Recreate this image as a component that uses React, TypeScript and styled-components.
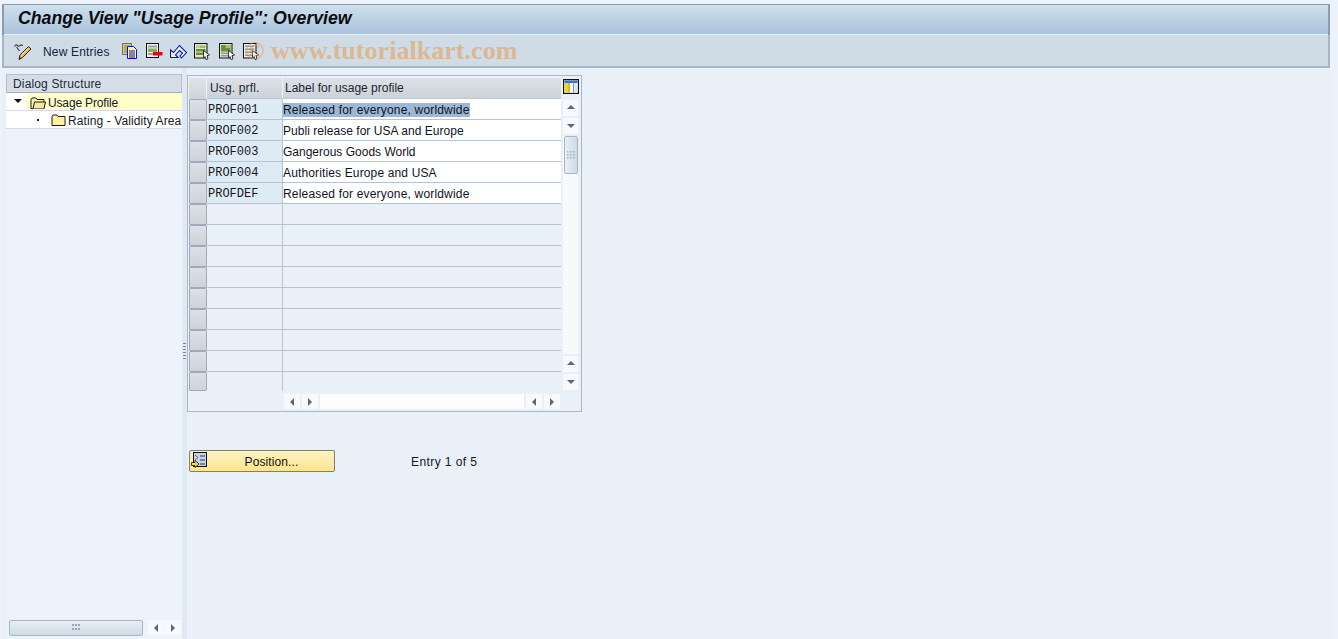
import React from 'react';
import styled, { createGlobalStyle } from 'styled-components';

const Global = createGlobalStyle`
  html, body { margin: 0; padding: 0; background: #edf2fa; overflow: hidden; }
  * { box-sizing: border-box; }
  svg { flex: none; }
`;

const UI = `"Liberation Sans", Arial, sans-serif`;

const Page = styled.div`
  width: 1338px; height: 639px; padding: 4px 8px 0 2px; display: flex; flex-direction: column;
  font: 12px ${UI}; color: #10131c; position: relative; overflow: hidden;
`;
const TitleBar = styled.div`
  height: 31px; flex: none; padding: 0 0 3px 14px; display: flex; align-items: center;
  background: linear-gradient(#cfe0ec, #a9c2dc);
  border: 1px solid #8c9cae; border-width: 1px 2px 0 2px; border-bottom: 0;
  box-shadow: inset 0 -1px 0 #e6f0f8;
`;
const Title = styled.h1`
  margin: 0; font: italic bold 17.7px ${UI}; color: #0a0c12; white-space: nowrap;
`;
const Toolbar = styled.div`
  height: 33px; flex: none; display: flex; align-items: center; padding: 1px 0 0 10px;
  background: #cfdce6; border: 2px solid #a6b5c6; border-top: 0; position: relative;
`;
const ToolIcon = styled.span<{ $ml?: number }>`
  display: flex; width: 16px; height: 16px; margin-left: ${p => p.$ml ?? 0}px; flex: none;
`;
const ToolText = styled.span`
  margin: 1px 0 0 13px; font-size: 12px; letter-spacing: 0.17px; color: #1a2140; white-space: nowrap;
`;
const Watermark = styled.span`
  position: absolute; left: 241px; top: 1px; font: bold 26.1px "Liberation Serif", serif; color: #e8953f;
  opacity: 0.5; white-space: nowrap;
`;
const Work = styled.div`
  flex: 1; display: flex; min-height: 0; background: #e9f0f7;
`;
const TreePanel = styled.div`
  width: 176px; margin: 6px 0 0 4px; flex: none; display: flex; flex-direction: column; background: #edf3fb;
`;
const TreeHeader = styled.div`
  height: 19px; flex: none; padding: 1px 0 0 6px; background: #d5dee7; border: 1px solid #b4c0cf; border-bottom-color: #9fadbd;
  font-size: 12px; letter-spacing: 0.15px; color: #1f2a3a; line-height: 16px; white-space: nowrap;
`;
const TreeRow = styled.div<{ $pad: number }>`
  height: 18px; flex: none; display: flex; align-items: center; padding-left: ${p => p.$pad}px;
  background: #fff; border-bottom: 1px solid #d3dce6; overflow: hidden; white-space: nowrap;
`;
const TreeLabel = styled.span<{ $sel?: boolean }>`
  display: flex; align-items: center; height: 17px; gap: 2px; padding: 2px 0 0 ${p => (p.$sel ? 4 : 1)}px; flex: 1;
  letter-spacing: ${p => (p.$sel ? -0.15 : 0.1)}px; color: #161a28;
  background: ${p => (p.$sel ? '#ffffc8' : 'transparent')};
`;
const Twisty = styled.span`
  width: 0; height: 0; border: 4px solid transparent; border-top: 4px solid #111; border-bottom: 0; margin: 0 4px 2px 0; flex: none;
`;
const Bullet = styled.span`
  width: 2px; height: 2px; background: #222; margin-right: 12px; flex: none;
`;
const TreeFill = styled.div`flex: 1;`;
const TreeScroll = styled.div`
  height: 17px; margin-bottom: 3px; flex: none; display: flex; align-items: center; gap: 1px; padding-left: 3px;
`;
const Thumb = styled.div<{ $w: number }>`
  width: ${p => p.$w}px; height: 16px; display: flex; align-items: center; justify-content: center; margin-right: 4px;
  background: linear-gradient(#e9eff5, #cddae6); border: 1px solid #a9b5c2; border-radius: 2px;
`;
const Sash = styled.div`
  width: 5px; flex: none; background: #e0e9f2; display: flex; align-items: center; justify-content: center; padding-bottom: 3px;
`;
const SashGrip = styled.div`
  width: 3px; height: 18px; background: repeating-linear-gradient(#7f8c9a 0 1px, transparent 1px 3px);
`;
const Main = styled.div`flex: 1; padding: 7px 0 0 0; display: flex; flex-direction: column; align-items: flex-start;`;
const TableBox = styled.div`
  width: 395px; height: 337px; flex: none; border: 1px solid #a9b7c8; padding: 2px 1px 0 1px; display: grid;
  grid-template-columns: 372px 19px; grid-template-rows: 313px 21px; background: #e9f0f7;
`;
const Grid = styled.div`
  display: grid; grid-template-columns: 18px 76px 1fr; grid-auto-rows: 21px; align-content: start; overflow: hidden;
`;
const Corner = styled.div`
  height: 21px; background: linear-gradient(#dfe4e9, #ccd3da); border-right: 1px solid #eef2f6;
`;
const HeadCell = styled.div<{ $w?: boolean }>`
  height: 21px; padding: 0 0 0 ${p => (p.$w ? 2 : 3)}px; display: flex; align-items: center; background: linear-gradient(#dde2e7, #cbd2d9);
  border-right: ${p => (p.$w ? 0 : '1px solid #f1f4f7')}; border-bottom: 1px solid #bcc7d3; letter-spacing: ${p => (p.$w ? 0 : 0.14)}px; color: #1d2530; white-space: nowrap;
`;
const RowBtn = styled.div<{ $last?: boolean }>`
  height: ${p => (p.$last ? 19 : 21)}px; background: linear-gradient(#dde1e6, #cdd3da); border: 1px solid #9dabba; border-radius: 1px;
`;
const KeyCell = styled.div<{ $e?: boolean }>`
  height: 21px; padding: 1px 0 0 1px; display: flex; align-items: center; background: ${p => (p.$e ? '#e9f0f7' : '#deebf5')};
  border-bottom: 1px solid #b5c3d2; border-right: 1px solid #b5c3d2; font: 12px "Liberation Mono", monospace; color: #16161c;
`;
const LabelCell = styled.div<{ $e?: boolean; $ls?: number }>`
  height: 21px; padding: 1px 0 0 0; display: flex; align-items: center; background: ${p => (p.$e ? '#e9f0f7' : '#fff')};
  border-bottom: 1px solid #b5c3d2; letter-spacing: ${p => p.$ls ?? 0}px; color: #10131c; white-space: nowrap;
`;
const Selected = styled.span`background: #9db8d6; height: 14px; line-height: 14px; display: block;`;
const VScroll = styled.div`
  display: flex; flex-direction: column; align-items: flex-start; padding-left: 2px;
`;
const ConfigBtn = styled.div`height: 22px; display: flex; align-items: flex-start; padding: 1px 0 0 0; flex: none;`;
const VBtn = styled.div`
  width: 15px; height: 16px; background: #f7f9fc; display: flex; align-items: center; justify-content: center; flex: none; margin-bottom: 2px;
`;
const VTrack = styled.div`
  width: 15px; height: 218px; flex: none; background: #f7f9fc; margin-bottom: 2px; padding-left: 1px;
`;
const VThumb = styled.div`
  width: 14px; height: 38px; background: linear-gradient(90deg, #e9eff5, #cddae6); border: 1px solid #a9b5c2; border-radius: 2px;
  display: flex; align-items: center; justify-content: center;
`;
const HScroll = styled.div`
  grid-column: 1; display: flex; align-items: flex-start; padding: 3px 0 0 95px; gap: 2px;
`;
const HBtn = styled.div`
  width: 16px; height: 15px; background: #f7f9fc; display: flex; align-items: center; justify-content: center; flex: none;
`;
const HTrack = styled.div`width: 204px; height: 15px; background: #fdfdfe;`;
const Bottom = styled.div`
  display: flex; align-items: center; margin: 37px 0 0 2px; height: 23px;
`;
const PosButton = styled.button`
  width: 146px; height: 22px; padding: 2px 0 0 19px; font: 12px ${UI}; letter-spacing: 0.1px; color: #111; position: relative;
  background: linear-gradient(#fff3c4, #ffe48e); border: 1px solid #7f7f70; border-radius: 2px; display: flex; align-items: center; justify-content: center;
`;
const PosIcon = styled.span`position: absolute; left: 1px; top: 1px; display: flex;`;
const Entry = styled.span`margin: 2px 0 0 76px; letter-spacing: 0.42px; color: #14161f;`;

const Arrow = ({ d }: { d: 'up' | 'down' | 'left' | 'right' }) => {
  const p = { up: '1,6 5,2 9,6', down: '1,3 9,3 5,7', left: '7,1 7,9 3,5', right: '3,1 3,9 7,5' }[d];
  return <svg width="10" height="10" viewBox="0 0 10 10"><polygon points={p} fill="#5c6a78" /></svg>;
};
const Dots = () => (
  <svg width="8" height="8" viewBox="0 0 8 8">
    {[0, 3, 6].flatMap(x => [0, 3, 6].map(y => <rect key={`${x}${y}`} x={x} y={y} width="1.5" height="1.5" fill="#9fadbb" />))}
  </svg>
);
const HDots = () => (
  <svg width="10" height="7" viewBox="0 0 10 7">
    {[1, 4, 7].flatMap(x => [0, 4].map(y => <rect key={`${x}${y}`} x={x} y={y} width="2" height="2" fill="#9aa8b5" />))}
  </svg>
);
const Folder = ({ open }: { open?: boolean }) => (
  <svg width="16" height="14" viewBox="0 0 16 14">
    <path d="M1 3.5 L2 2 H6 L7 3.5 H14 V12.5 H1 Z" fill={open ? '#fdf4c0' : '#fff0a8'} stroke="#1a1a10" strokeWidth="1" />
    {open && <path d="M3 12.5 L4.5 6 H15.5 L14 12.5" fill="#f8e89c" stroke="#1a1a10" strokeWidth="1" />}
  </svg>
);
const Pencil = () => (
  <svg width="18" height="18" viewBox="0 0 18 18">
    <path d="M0.5 3.5 q1.5 -2.5 3 -1 q1.5 1.5 2.5 0 q1.5 -1.5 2.5 .5" fill="none" stroke="#444" strokeWidth="1.2" />
    <path d="M2.5 4 l3 4" stroke="#444" strokeWidth="1.2" />
    <path d="M5 16.5 L6 12 L14.5 3.5 L17 6 L8.5 14.5 Z" fill="#f4b44a" stroke="#222" strokeWidth="1" />
    <path d="M7 12.5 L14.5 5" stroke="#fff2c8" strokeWidth="1" />
    <path d="M5 16.5 L5.6 14 L7.4 15.6 Z" fill="#222" />
  </svg>
);
const CopyIcon = () => (
  <svg width="16" height="16" viewBox="0 0 16 16">
    <rect x="0.5" y="0.5" width="9" height="11" fill="#d6cc78" stroke="#77735a" />
    <path d="M2 3 H8 M2 5 H8 M2 7 H8 M2 9 H8" stroke="#8d8a5e" />
    <path d="M5.5 3.5 H11.5 L14.5 6.5 V15.5 H5.5 Z" fill="#fff68a" stroke="#0a12c8" />
    <path d="M7 8 H13 M7 10 H13 M7 12 H13 M7 14 H13" stroke="#0a12c8" />
  </svg>
);
const DelIcon = () => (
  <svg width="17" height="16" viewBox="0 0 17 16">
    <rect x="0.5" y="0.5" width="12" height="14" fill="#eef0f0" stroke="#111" />
    <rect x="2" y="2.5" width="9" height="2" fill="#93a2a8" />
    <rect x="2" y="5.5" width="9" height="3.5" fill="#8eaa5a" />
    <rect x="2" y="10" width="5" height="2" fill="#93a2a8" />
    <rect x="7" y="9" width="9.5" height="3.5" fill="#dc0c12" />
  </svg>
);
const UndoIcon = () => (
  <svg width="17" height="16" viewBox="0 0 17 16">
    <path d="M0.5 7 V14.5 H8 L5.5 12 L9.5 7.5 L12.5 10 L10 13 L11.5 15 L16.5 9.5 L9.5 2.5 L3.5 9.5 Z" fill="#eef3ff" stroke="#0c16b0" strokeWidth="1.1" />
  </svg>
);
const SelIcon = ({ kind }: { kind: 'a' | 'b' | 'c' }) => (
  <svg width="17" height="17" viewBox="0 0 17 17">
    <rect x="0.5" y="0.5" width="12.5" height="14.5" fill={kind === 'c' ? '#eef0f0' : '#dfe8cc'} stroke="#111" />
    {kind === 'a' && <>
      <rect x="2" y="2.5" width="9.5" height="2.5" fill="#9fb96a" /><rect x="2" y="6" width="9.5" height="2.5" fill="#6d8c38" /><rect x="2" y="9.5" width="9.5" height="2.5" fill="#6d8c38" />
      <rect x="2" y="2.5" width="4" height="2.5" fill="#c3cbb0" />
    </>}
    {kind === 'b' && <>
      <rect x="2" y="2" width="9.5" height="6.5" fill="#6d8c38" /><rect x="6.5" y="2" width="5" height="3" fill="#a9c46a" /><rect x="2" y="9.5" width="9.5" height="1.5" fill="#8d9aa0" /><rect x="2" y="12" width="9.5" height="1.5" fill="#8d9aa0" />
    </>}
    {kind === 'c' && <>
      <rect x="2" y="2.5" width="9.5" height="1.5" fill="#8d9aa0" /><rect x="2" y="5.5" width="9.5" height="1.5" fill="#8d9aa0" /><rect x="2" y="8.5" width="9.5" height="1.5" fill="#8d9aa0" /><rect x="2" y="11.5" width="9.5" height="1.5" fill="#8d9aa0" />
    </>}
    <path d="M9.5 7.5 L15.5 12 L13 12.5 L14 16 L12 16.5 L11 13.5 L9.5 15 Z" fill="#fff" stroke="#111" strokeWidth="0.8" />
  </svg>
);
const ColConfig = () => (
  <svg width="16" height="15" viewBox="0 0 16 15">
    <rect x="0.5" y="0.5" width="15" height="14" fill="#fff" stroke="#111" strokeWidth="1.4" />
    <rect x="1.5" y="1.5" width="13" height="2.5" fill="#3b6fc4" />
    <rect x="2" y="4" width="4" height="9.5" fill="#ffd400" />
    <rect x="6.5" y="4" width="3.5" height="9.5" fill="#f4f6f8" />
    <rect x="11" y="4" width="3.5" height="9.5" fill="#dfe6ee" />
    <path d="M6.2 1.5 V13.5 M10.5 1.5 V13.5" stroke="#6d7a8a" strokeWidth="0.8" />
  </svg>
);
const PosGlyph = () => (
  <svg width="16" height="17" viewBox="0 0 16 17">
    <rect x="2.5" y="0.5" width="13" height="14" fill="#c8d2e6" stroke="#111" />
    <path d="M9 4 H14 M9 8 H14 M9 12 H14" stroke="#25306a" strokeWidth="1.2" />
    <path d="M4 3 L7 5.5 L4 8" fill="none" stroke="#667" />
    <path d="M0.5 10.5 H4 V8.5 L8 12 L4 15.5 V13.5 H0.5 Z" fill="#ffe030" stroke="#111" strokeWidth="0.8" />
  </svg>
);

const rows: [string, string, number][] = [
  ['PROF001', 'Released for everyone, worldwide', 0.18],
  ['PROF002', 'Publi release for USA and Europe', 0.04],
  ['PROF003', 'Gangerous Goods World', 0],
  ['PROF004', 'Authorities Europe and USA', 0.14],
  ['PROFDEF', 'Released for everyone, worldwide', 0.18],
  ...Array.from({ length: 9 }, (): [string, string, number] => ['', '', 0]),
];

export default function App() {
  return (
    <Page>
      <Global />
      <TitleBar><Title>Change View "Usage Profile": Overview</Title></TitleBar>
      <Toolbar>
        <ToolIcon><Pencil /></ToolIcon>
        <ToolText>New Entries</ToolText>
        <ToolIcon $ml={12}><CopyIcon /></ToolIcon>
        <ToolIcon $ml={8}><DelIcon /></ToolIcon>
        <ToolIcon $ml={8}><UndoIcon /></ToolIcon>
        <ToolIcon $ml={8}><SelIcon kind="a" /></ToolIcon>
        <ToolIcon $ml={9}><SelIcon kind="b" /></ToolIcon>
        <ToolIcon $ml={8}><SelIcon kind="c" /></ToolIcon>
        <Watermark>© www.tutorialkart.com</Watermark>
      </Toolbar>
      <Work>
        <TreePanel>
          <TreeHeader>Dialog Structure</TreeHeader>
          <TreeRow $pad={8}><Twisty /><TreeLabel $sel><Folder open />Usage Profile</TreeLabel></TreeRow>
          <TreeRow $pad={31}><Bullet /><Folder /><TreeLabel>Rating - Validity Area</TreeLabel></TreeRow>
          <TreeFill />
          <TreeScroll>
            <Thumb $w={134}><HDots /></Thumb>
            <HBtn><Arrow d="left" /></HBtn>
            <HBtn><Arrow d="right" /></HBtn>
          </TreeScroll>
        </TreePanel>
        <Sash><SashGrip /></Sash>
        <Main>
          <TableBox>
            <Grid>
              <Corner />
              <HeadCell>Usg. prfl.</HeadCell>
              <HeadCell $w>Label for usage profile</HeadCell>
              {rows.map((r, i) => (
                <React.Fragment key={i}>
                  <RowBtn $last={i === rows.length - 1} />
                  <KeyCell $e={!r[0]}>{r[0]}</KeyCell>
                  <LabelCell $e={!r[0]} $ls={r[2]}>{i === 0 ? <Selected>{r[1]}</Selected> : r[1]}</LabelCell>
                </React.Fragment>
              ))}
            </Grid>
            <VScroll>
              <ConfigBtn><ColConfig /></ConfigBtn>
              <VBtn><Arrow d="up" /></VBtn>
              <VBtn><Arrow d="down" /></VBtn>
              <VTrack><VThumb><Dots /></VThumb></VTrack>
              <VBtn><Arrow d="up" /></VBtn>
              <VBtn><Arrow d="down" /></VBtn>
            </VScroll>
            <HScroll>
              <HBtn><Arrow d="left" /></HBtn>
              <HBtn><Arrow d="right" /></HBtn>
              <HTrack />
              <HBtn><Arrow d="left" /></HBtn>
              <HBtn><Arrow d="right" /></HBtn>
            </HScroll>
          </TableBox>
          <Bottom>
            <PosButton><PosIcon><PosGlyph /></PosIcon>Position...</PosButton>
            <Entry>Entry 1 of 5</Entry>
          </Bottom>
        </Main>
      </Work>
    </Page>
  );
}
